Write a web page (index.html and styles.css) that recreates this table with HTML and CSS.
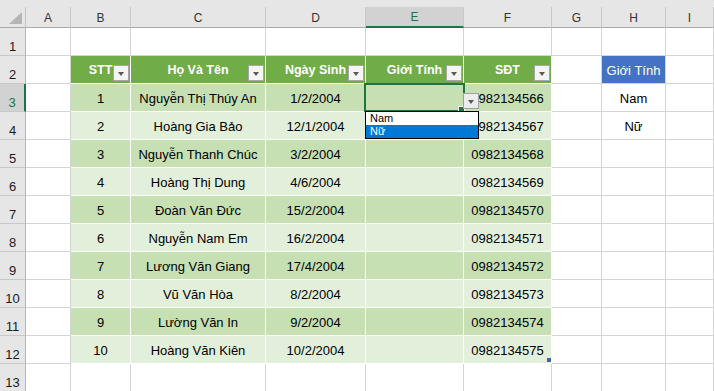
FILE: index.html
```html
<!DOCTYPE html>
<html lang="vi">
<head>
  <meta charset="UTF-8" />
  <title>Danh sách</title>
  <link rel="stylesheet" href="styles.css">
</head>
<body>
  <div class="sheet">
    <div class="topbar"></div>

    <!-- tiêu đề cột -->
    <div class="row colhead">
      <div class="corner">
        <svg width="13" height="12" viewBox="0 0 13 12"><polygon points="0,12 13,12 13,0" fill="#b5b5b5"/></svg>
      </div>
      <div class="ch">A</div>
      <div class="ch">B</div>
      <div class="ch">C</div>
      <div class="ch">D</div>
      <div class="ch active">E</div>
      <div class="ch">F</div>
      <div class="ch">G</div>
      <div class="ch">H</div>
      <div class="ch">I</div>
    </div>

    <div class="row">
      <div class="rh">1</div>
      <div class="cell"></div><div class="cell"></div><div class="cell"></div><div class="cell"></div>
      <div class="cell"></div><div class="cell"></div><div class="cell"></div><div class="cell"></div><div class="cell"></div>
    </div>

    <div class="row">
      <div class="rh">2</div>
      <div class="cell"></div>
      <div class="cell th">STT<span class="filter"></span></div>
      <div class="cell th">Họ Và Tên<span class="filter"></span></div>
      <div class="cell th">Ngày Sinh<span class="filter"></span></div>
      <div class="cell th">Giới Tính<span class="filter"></span></div>
      <div class="cell th">SĐT<span class="filter"></span></div>
      <div class="cell"></div>
      <div class="cell list-head">Giới Tính</div>
      <div class="cell"></div>
    </div>

    <div class="row">
      <div class="rh active">3</div>
      <div class="cell"></div>
      <div class="cell td">1</div>
      <div class="cell td">Nguyễn Thị Thúy An</div>
      <div class="cell td">1/2/2004</div>
      <div class="cell td selected">
        <span class="drop-btn"></span>
        <div class="drop-list">
          <div class="drop-item">Nam</div>
          <div class="drop-item on">Nữ</div>
        </div>
      </div>
      <div class="cell td">0982134566</div>
      <div class="cell"></div>
      <div class="cell">Nam</div>
      <div class="cell"></div>
    </div>

    <div class="row alt">
      <div class="rh">4</div>
      <div class="cell"></div>
      <div class="cell td">2</div>
      <div class="cell td">Hoàng Gia Bảo</div>
      <div class="cell td">12/1/2004</div>
      <div class="cell td"></div>
      <div class="cell td">0982134567</div>
      <div class="cell"></div>
      <div class="cell">Nữ</div>
      <div class="cell"></div>
    </div>

    <div class="row">
      <div class="rh">5</div>
      <div class="cell"></div>
      <div class="cell td">3</div>
      <div class="cell td">Nguyễn Thanh Chúc</div>
      <div class="cell td">3/2/2004</div>
      <div class="cell td"></div>
      <div class="cell td">0982134568</div>
      <div class="cell"></div><div class="cell"></div><div class="cell"></div>
    </div>

    <div class="row alt">
      <div class="rh">6</div>
      <div class="cell"></div>
      <div class="cell td">4</div>
      <div class="cell td">Hoàng Thị Dung</div>
      <div class="cell td">4/6/2004</div>
      <div class="cell td"></div>
      <div class="cell td">0982134569</div>
      <div class="cell"></div><div class="cell"></div><div class="cell"></div>
    </div>

    <div class="row">
      <div class="rh">7</div>
      <div class="cell"></div>
      <div class="cell td">5</div>
      <div class="cell td">Đoàn Văn Đức</div>
      <div class="cell td">15/2/2004</div>
      <div class="cell td"></div>
      <div class="cell td">0982134570</div>
      <div class="cell"></div><div class="cell"></div><div class="cell"></div>
    </div>

    <div class="row alt">
      <div class="rh">8</div>
      <div class="cell"></div>
      <div class="cell td">6</div>
      <div class="cell td">Nguyễn Nam Em</div>
      <div class="cell td">16/2/2004</div>
      <div class="cell td"></div>
      <div class="cell td">0982134571</div>
      <div class="cell"></div><div class="cell"></div><div class="cell"></div>
    </div>

    <div class="row">
      <div class="rh">9</div>
      <div class="cell"></div>
      <div class="cell td">7</div>
      <div class="cell td">Lương Văn Giang</div>
      <div class="cell td">17/4/2004</div>
      <div class="cell td"></div>
      <div class="cell td">0982134572</div>
      <div class="cell"></div><div class="cell"></div><div class="cell"></div>
    </div>

    <div class="row alt">
      <div class="rh">10</div>
      <div class="cell"></div>
      <div class="cell td">8</div>
      <div class="cell td">Vũ Văn Hòa</div>
      <div class="cell td">8/2/2004</div>
      <div class="cell td"></div>
      <div class="cell td">0982134573</div>
      <div class="cell"></div><div class="cell"></div><div class="cell"></div>
    </div>

    <div class="row">
      <div class="rh">11</div>
      <div class="cell"></div>
      <div class="cell td">9</div>
      <div class="cell td">Lường Văn In</div>
      <div class="cell td">9/2/2004</div>
      <div class="cell td"></div>
      <div class="cell td">0982134574</div>
      <div class="cell"></div><div class="cell"></div><div class="cell"></div>
    </div>

    <div class="row alt">
      <div class="rh">12</div>
      <div class="cell"></div>
      <div class="cell td">10</div>
      <div class="cell td">Hoàng Văn Kiên</div>
      <div class="cell td">10/2/2004</div>
      <div class="cell td"></div>
      <div class="cell td last">0982134575<span class="resize"></span></div>
      <div class="cell"></div><div class="cell"></div><div class="cell"></div>
    </div>

    <div class="row">
      <div class="rh">13</div>
      <div class="cell"></div><div class="cell"></div><div class="cell"></div><div class="cell"></div>
      <div class="cell"></div><div class="cell"></div><div class="cell"></div><div class="cell"></div><div class="cell"></div>
    </div>
  </div>
</body>
</html>
```

FILE: styles.css
```css
body {
  margin: 0;
  padding: 0;
  background-color: #fff;
  font-family: 'Liberation Sans', Arial, sans-serif;
  overflow: hidden;
}

.sheet {
  width: 714px;
  height: 391px;
  overflow: hidden;
}

.topbar {
  height: 7px;
  background-color: #e6e6e6;
}

.row {
  display: grid;
  grid-template-columns: 26px 45px 60px 135px 100px 98px 88px 50px 64px 1fr;
  height: 28px;
}

/* Tiêu đề cột A, B, C ... */
.colhead {
  height: 21px;
  background-color: #e6e6e6;
}

.corner {
  display: flex;
  align-items: flex-end;
  justify-content: flex-end;
  padding: 0 3px 3px 0;
  border-right: 1px solid #c4c4c4;
  border-bottom: 1px solid #ababab;
  box-sizing: border-box;
}

.ch {
  display: flex;
  align-items: flex-end;
  justify-content: center;
  padding-bottom: 2px;
  font-size: 12px;
  color: #333;
  border-right: 1px solid #c8c8c8;
  border-bottom: 1px solid #ababab;
  box-sizing: border-box;
}

.ch.active {
  background-color: #d2d2d2;
  color: #217346;
  border-bottom: 2px solid #217346;
}

/* Số thứ tự dòng */
.rh {
  display: flex;
  align-items: flex-end;
  justify-content: center;
  padding-bottom: 1px;
  background-color: #e6e6e6;
  font-size: 13px;
  color: #1a1a1a;
  border-right: 1px solid #b5b5b5;
  border-bottom: 1px solid #c8c8c8;
  box-sizing: border-box;
}

.rh.active {
  background-color: #d2d2d2;
  color: #217346;
  border-right: 2px solid #217346;
}

.cell {
  position: relative;
  display: flex;
  align-items: center;
  justify-content: center;
  padding-top: 1px;
  font-size: 13px;
  color: #000;
  border-right: 1px solid #d4d4d4;
  border-bottom: 1px solid #d4d4d4;
  box-sizing: border-box;
  white-space: nowrap;
}

/* Bảng dữ liệu */
.th {
  background-color: #70ad47;
  color: #fff;
  font-weight: bold;
  font-size: 12.5px;
  border-color: #fff;
}

.td {
  background-color: #c6e0b4;
  border-color: #fff;
}

.alt .td {
  background-color: #e2efda;
}

.filter {
  position: absolute;
  right: 1px;
  bottom: 2px;
  width: 16px;
  height: 16px;
  box-sizing: border-box;
  background-color: #f4f4f4;
  border: 1px solid #a6a6a6;
}

.filter::after,
.drop-btn::after {
  content: "";
  position: absolute;
  left: 3.5px;
  top: 6px;
  border-left: 3.5px solid transparent;
  border-right: 3.5px solid transparent;
  border-top: 4px solid #595959;
}

.list-head {
  background-color: #4472c4;
  color: #fff;
}

/* Ô đang chọn có danh sách thả xuống */
.selected {
  overflow: visible;
  z-index: 2;
}

.selected::before {
  content: "";
  position: absolute;
  top: -1px;
  left: -2px;
  right: -2px;
  bottom: -1px;
  border: 2px solid #217346;
}

.selected::after {
  content: "";
  position: absolute;
  right: -2px;
  bottom: -2px;
  width: 5px;
  height: 5px;
  background-color: #217346;
  border: 1px solid #fff;
}

.drop-btn {
  position: absolute;
  left: 97px;
  top: 9px;
  width: 16px;
  height: 16px;
  box-sizing: border-box;
  background-color: #ececec;
  border: 1px solid #a0a0a0;
  z-index: 3;
}

.drop-list {
  position: absolute;
  left: -1px;
  top: 27px;
  width: 114px;
  box-sizing: border-box;
  background-color: #fff;
  border: 1px solid #000;
  z-index: 4;
  font-size: 11px;
}

.drop-item {
  height: 13px;
  line-height: 13px;
  padding-left: 4px;
  color: #000;
}

.drop-item.on {
  background-color: #0078d7;
  color: #fff;
}

.resize {
  position: absolute;
  right: 0;
  bottom: 1px;
  width: 4px;
  height: 4px;
  background-color: #3f64b5;
}
```
